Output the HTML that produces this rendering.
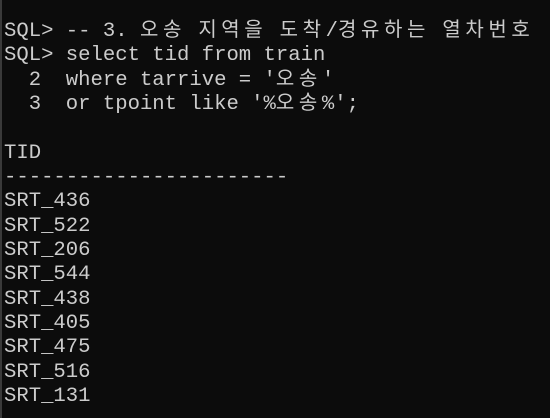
<!DOCTYPE html>
<html><head><meta charset="utf-8"><style>
html,body{margin:0;padding:0;width:550px;height:418px;overflow:hidden;background:#0c0c0c;}
body{border-left:2px solid #3a3a3a;box-sizing:border-box;}
pre{margin:0;padding:20px 0 0 2px;font-family:"Liberation Mono","Noto Sans CJK KR",monospace;font-size:20.6px;line-height:24.35px;color:#cccccc;white-space:pre;}
.k{font-family:"Noto Sans CJK KR","NanumGothic",sans-serif;letter-spacing:4.6px;font-size:20px;line-height:10px;}
</style></head><body><pre>SQL&gt; -- 3. <span class="k">오송</span> <span class="k">지역을</span> <span class="k">도착</span>/<span class="k">경유하는</span> <span class="k">열차번호</span>
SQL&gt; select tid from train
  2  where tarrive = '<span class="k">오송</span>'
  3  or tpoint like '%<span class="k">오송</span>%';

TID
-----------------------
SRT_436
SRT_522
SRT_206
SRT_544
SRT_438
SRT_405
SRT_475
SRT_516
SRT_131</pre></body></html>
